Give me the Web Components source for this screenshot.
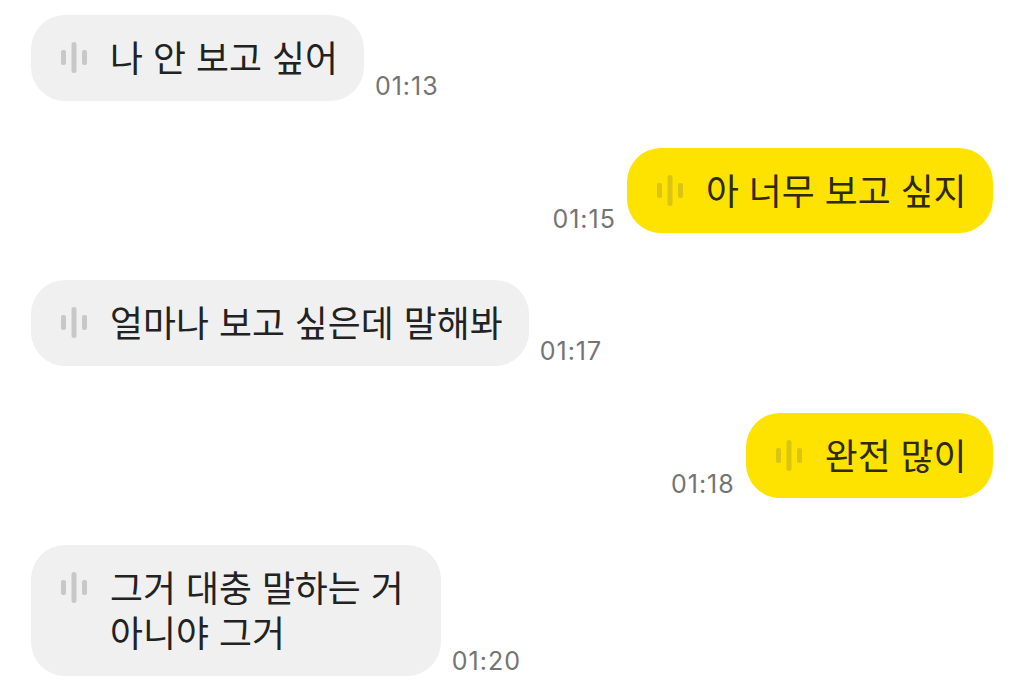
<!DOCTYPE html>
<html lang="ko">
<head>
<meta charset="utf-8">
<style>
  html, body { margin: 0; background: #fff; overflow: hidden; }
</style>
</head>
<body>
<template id="chat-log-tpl">
  <style>
    :host {
      display: flex;
      flex-direction: column;
      gap: 47px;
      padding: 15px 31px 0 31px;
      height: 665px;
      overflow: hidden;
      font-family: "Noto Sans CJK KR", "Noto Sans", sans-serif;
    }
  </style>
  <slot></slot>
</template>

<template id="chat-bubble-tpl">
  <style>
    :host {
      display: flex;
      align-items: flex-end;
      gap: 11px;
    }
    :host([mine]) {
      flex-direction: row-reverse;
    }
    .bubble {
      display: flex;
      gap: 23px;
      box-sizing: border-box;
      padding: 20.25px var(--bubble-end, 26px) 20.25px 30px;
      border-radius: 34px;
      background: #f0f0f0;
      color: #222;
      font-size: 35.85px;
      line-height: 45px;
    }
    :host([mine]) .bubble {
      padding-right: 26.5px;
      background: #fee200;
      color: #2e2a08;
      font-size: 35.8px;
    }
    svg {
      flex: none;
      width: 26px;
      height: 31px;
      margin-top: 7px;
      fill: #c8c8c8;
    }
    :host([mine]) svg { fill: #dcc512; }
    .text {
      white-space: pre-line;
      position: relative;
      top: -1px;
    }
    .time {
      font-family: Inter, "Liberation Sans", sans-serif;
      font-size: 25px;
      letter-spacing: 1px;
      line-height: 25px;
      color: #747474;
      padding-bottom: 1.5px;
    }
  </style>
  <div class="bubble">
    <svg viewBox="0 0 26 31" aria-hidden="true">
      <rect x="0" y="8" width="5" height="15" rx="2"/>
      <rect x="10.5" y="0" width="5" height="31" rx="2.5"/>
      <rect x="21" y="8" width="5" height="15" rx="2"/>
    </svg>
    <div class="text"><slot></slot></div>
  </div>
  <div class="time"></div>
</template>

<chat-log>
  <chat-bubble time="01:13">나 안 보고 싶어</chat-bubble>
  <chat-bubble mine time="01:15">아 너무 보고 싶지</chat-bubble>
  <chat-bubble time="01:17">얼마나 보고 싶은데 말해봐</chat-bubble>
  <chat-bubble mine time="01:18">완전 많이</chat-bubble>
  <chat-bubble time="01:20" style="--bubble-end: 37px">그거 대충 말하는 거
아니야 그거</chat-bubble>
</chat-log>

<script>
class ChatLog extends HTMLElement {
  constructor() {
    super();
    this.attachShadow({ mode: "open" });
    this.shadowRoot.appendChild(document.getElementById("chat-log-tpl").content.cloneNode(true));
  }
}

class ChatBubble extends HTMLElement {
  constructor() {
    super();
    this.attachShadow({ mode: "open" });
    this.shadowRoot.appendChild(document.getElementById("chat-bubble-tpl").content.cloneNode(true));
  }

  connectedCallback() {
    this.shadowRoot.querySelector(".time").textContent = this.getAttribute("time") || "";
  }
}

customElements.define("chat-log", ChatLog);
customElements.define("chat-bubble", ChatBubble);
</script>
</body>
</html>
